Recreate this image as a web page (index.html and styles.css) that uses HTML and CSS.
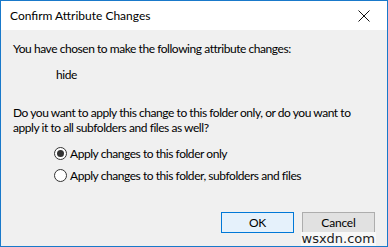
FILE: index.html
```html
<!DOCTYPE html>
<html>
<head>
<meta charset="utf-8">
<link rel="stylesheet" href="styles.css">
</head>
<body>
<div class="window">
  <div class="titlebar">
    <span class="title">Confirm Attribute Changes</span>
    <span class="close">
      <svg width="12" height="12" viewBox="0 0 12 12"><path d="M0.5 0.5 L11.5 11.5 M11.5 0.5 L0.5 11.5" stroke="#111" stroke-width="1" fill="none"/></svg>
    </span>
  </div>
  <div class="content">
    <p class="line">You have chosen to make the following attribute changes:</p>
    <p class="line attr">hide</p>
    <p class="line question">Do you want to apply this change to this folder only, or do you want to<br>apply it to all subfolders and files as well?</p>
    <div class="options">
      <label class="option"><span class="radio checked"></span>Apply changes to this folder only</label>
      <label class="option"><span class="radio"></span>Apply changes to this folder, subfolders and files</label>
    </div>
  </div>
  <div class="buttons">
    <button class="btn default">OK</button>
    <button class="btn">Cancel</button>
  </div>
  <span class="watermark">wsxdn.com</span>
</div>
</body>
</html>
```
FILE: styles.css
```css
html, body {
  margin: 0;
  padding: 0;
  background: #ffffff;
}
.window {
  position: relative;
  width: 388px;
  height: 247px;
  box-sizing: border-box;
  border: 1px solid #1979ca;
  background: #f0f0f0;
  font-family: Lato, "Noto Sans", sans-serif;
  font-size: 12px;
  letter-spacing: -0.45px;
  color: #000;
  display: flex;
  flex-direction: column;
}
.titlebar {
  height: 29px;
  background: #ffffff;
  display: flex;
  align-items: center;
  justify-content: space-between;
  padding-left: 9px;
}
.title {
  font-size: 12px;
  letter-spacing: 0;
  color: #000;
}
.close {
  width: 46px;
  height: 29px;
  display: flex;
  align-items: center;
  justify-content: center;
}
.content {
  padding: 11px 11px 0 12px;
}
.line {
  margin: 0;
  line-height: 15px;
  white-space: nowrap;
}
.attr {
  margin-top: 11px;
  padding-left: 43px;
}
.question {
  margin-top: 23px;
}
.options {
  margin-top: 11px;
  padding-left: 41px;
  display: flex;
  flex-direction: column;
  gap: 7px;
}
.option {
  display: flex;
  align-items: center;
  line-height: 15px;
  gap: 3px;
}
.radio {
  width: 13px;
  height: 13px;
  box-sizing: border-box;
  border: 1px solid #333;
  border-radius: 50%;
  background: #fff;
  display: flex;
  align-items: center;
  justify-content: center;
}
.radio.checked::after {
  content: "";
  width: 7px;
  height: 7px;
  border-radius: 50%;
  background: #333;
}
.buttons {
  margin-top: auto;
  margin-bottom: 13px;
  padding-right: 12px;
  display: flex;
  justify-content: flex-end;
  gap: 8px;
}
.btn {
  width: 73px;
  height: 21px;
  box-sizing: border-box;
  border: 1px solid #adadad;
  background: #e1e1e1;
  font-family: Lato, "Noto Sans", sans-serif;
  font-size: 12px;
  letter-spacing: -0.2px;
  color: #000;
  padding: 0;
}
.btn.default {
  border-color: #0078d7;
  background: #e5f1fb;
}
.watermark {
  position: absolute;
  right: 11px;
  bottom: 0px;
  font-family: "DejaVu Sans", sans-serif;
  font-size: 13px;
  line-height: 14px;
  letter-spacing: 0;
  color: #222;
  background: #f8f8f8;
  padding: 0 1px;
}
```
